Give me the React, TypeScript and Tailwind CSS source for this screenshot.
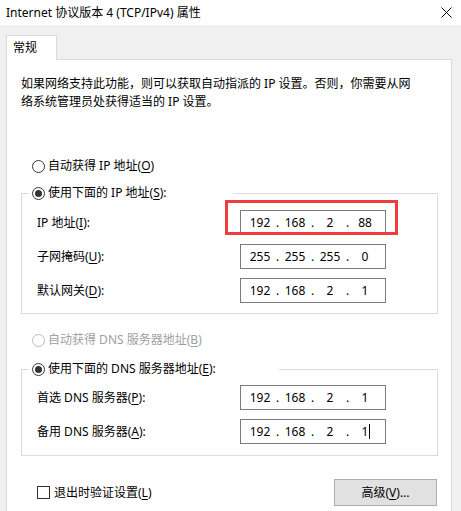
import React from "react";

const U = ({ c }: { c: string }) => <span className="underline underline-offset-2">{c}</span>;

function Radio({ checked, disabled }: { checked?: boolean; disabled?: boolean }) {
  return (
    <span
      className={`flex h-[13px] w-[13px] shrink-0 items-center justify-center rounded-full border bg-white ${
        disabled ? "border-[#bcbcbc]" : "border-[#333333]"
      }`}
    >
      {checked && <span className="h-[7px] w-[7px] rounded-full bg-[#333333]" />}
    </span>
  );
}

function IpBox({ parts, caret }: { parts: string[]; caret?: boolean }) {
  return (
    <div className="flex h-[25px] w-[146px] items-center border border-[#7a7a7a] bg-white pl-[4px] text-black">
      {parts.map((p, i) => (
        <React.Fragment key={i}>
          <span className="relative w-[30px] text-center">
            {p}
            {caret && i === 3 && (
              <span className="absolute left-[19px] top-[1px] h-[15px] w-px bg-black" />
            )}
          </span>
          {i < 3 && <span className="w-[5px] text-center">.</span>}
        </React.Fragment>
      ))}
    </div>
  );
}

function Row({ label, parts, caret }: { label: React.ReactNode; parts: string[]; caret?: boolean }) {
  return (
    <div className="flex h-[25px] items-center">
      <div className="w-[203px]">{label}</div>
      <IpBox parts={parts} caret={caret} />
    </div>
  );
}

export default function App() {
  return (
    <div className="relative h-[511px] w-[461px] overflow-hidden bg-[#f0f0f0] font-['Noto_Sans','Noto_Sans_CJK_SC',sans-serif] text-[12px] leading-[18px] text-black">
      {/* title bar */}
      <div className="flex h-[25px] items-center justify-between bg-white pl-[6px] pr-[9px]">
        <span>Internet 协议版本 4 (TCP/IPv4) 属性</span>
        <svg width="11" height="11" viewBox="0 0 11 11">
          <path d="M0.5 0.5 L10.5 10.5 M10.5 0.5 L0.5 10.5" stroke="#000" strokeWidth="1" />
        </svg>
      </div>

      {/* tab */}
      <div className="pl-[6px] pt-[10px]">
        <div className="relative z-10 flex h-[25px] w-[51px] items-start border border-b-0 border-[#d9d9d9] bg-white pl-[6px] pt-[3px]">
          常规
        </div>
      </div>

      {/* panel */}
      <div className="-mt-px ml-[6px] h-[460px] w-[446px] border border-[#d9d9d9] bg-white">
        <p className="pl-[14px] pt-[15px]">
          如果网络支持此功能，则可以获取自动指派的 IP 设置。否则，你需要从网
          <br />
          络系统管理员处获得适当的 IP 设置。
        </p>

        <div className="ml-[25px] mt-[46px] flex h-[18px] items-center gap-[3px]">
          <Radio />
          <span>
            自动获得 IP 地址(<U c="O" />)
          </span>
        </div>

        <fieldset className="ml-[14px] mt-[9px] w-[417px] border border-[#dcdcdc] pb-[10px] pl-[15px]">
          <legend className="-ml-[8px] w-[204px] pl-[3px]">
            <span className="flex h-[18px] items-center gap-[3px]">
              <Radio checked />
              <span>
                使用下面的 IP 地址(<U c="S" />):
              </span>
            </span>
          </legend>
          <div className="mt-[8px] flex flex-col gap-[9px]">
            <Row label={<>IP 地址(<U c="I" />):</>} parts={["192", "168", "2", "88"]} />
            <Row label={<>子网掩码(<U c="U" />):</>} parts={["255", "255", "255", "0"]} />
            <Row label={<>默认网关(<U c="D" />):</>} parts={["192", "168", "2", "1"]} />
          </div>
        </fieldset>

        <div className="ml-[25px] mt-[17px] flex h-[18px] items-center gap-[3px] text-[#a0a0a0]">
          <Radio disabled />
          <span>
            自动获得 DNS 服务器地址(<U c="B" />)
          </span>
        </div>

        <fieldset className="ml-[14px] mt-[11px] w-[417px] border border-[#dcdcdc] pb-[11px] pl-[15px]">
          <legend className="-ml-[8px] w-[250px] pl-[3px]">
            <span className="flex h-[18px] items-center gap-[3px]">
              <Radio checked />
              <span>
                使用下面的 DNS 服务器地址(<U c="E" />):
              </span>
            </span>
          </legend>
          <div className="mt-[7px] flex flex-col gap-[9px]">
            <Row label={<>首选 DNS 服务器(<U c="P" />):</>} parts={["192", "168", "2", "1"]} />
            <Row label={<>备用 DNS 服务器(<U c="A" />):</>} parts={["192", "168", "2", "1"]} caret />
          </div>
        </fieldset>

        <div className="ml-[30px] mt-[23px] flex w-[400px] items-center justify-between">
          <div className="flex items-center gap-[4px]">
            <span className="h-[13px] w-[13px] border border-[#333333] bg-white" />
            <span>
              退出时验证设置(<U c="L" />)
            </span>
          </div>
          <button className="flex h-[27px] w-[103px] items-center justify-center border border-[#adadad] bg-[#e1e1e1]">
            高级(<U c="V" />)...
          </button>
        </div>
      </div>

      {/* highlight box */}
      <div className="pointer-events-none absolute left-[225px] top-[200px] h-[35px] w-[173px] border-[3px] border-[#f03c3c]" />
    </div>
  );
}
